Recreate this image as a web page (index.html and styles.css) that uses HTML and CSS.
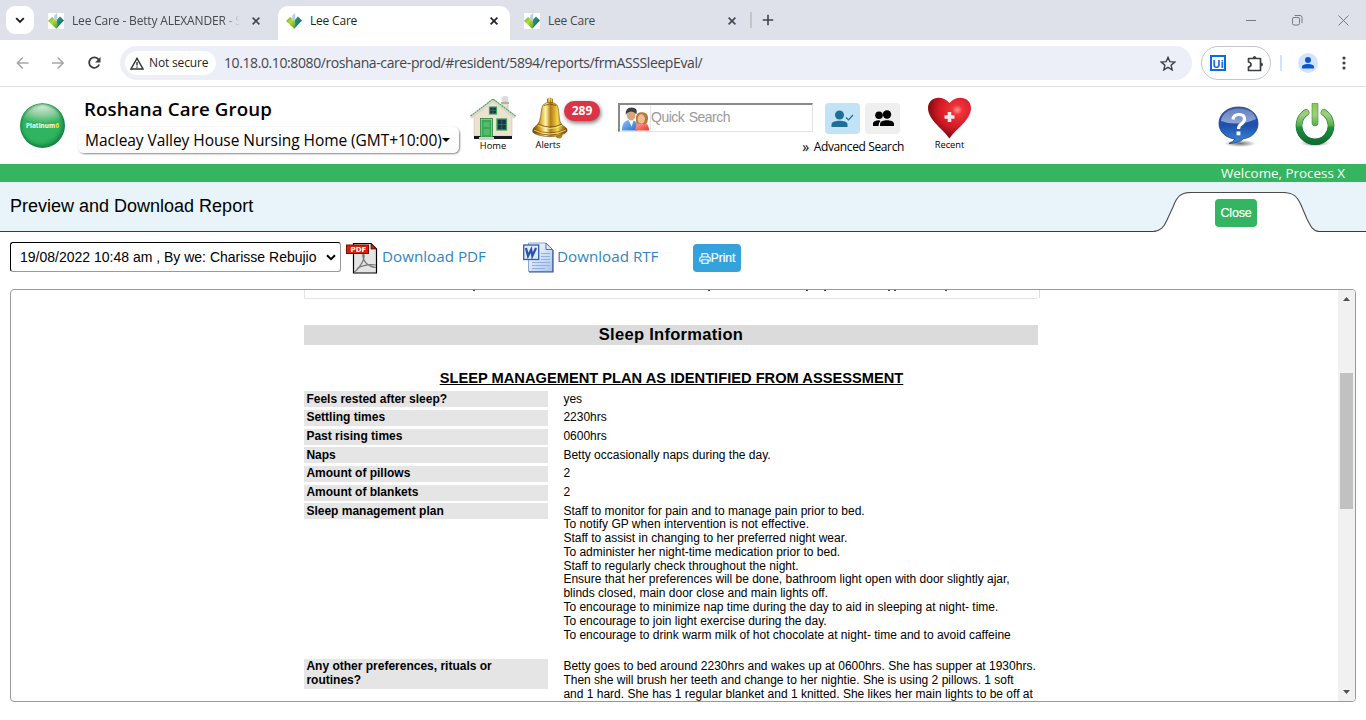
FILE: index.html
```html
<!DOCTYPE html>
<html lang="en">
<head>
<meta charset="utf-8">
<title>Lee Care</title>
<link rel="stylesheet" href="styles.css">
</head>
<body>
<svg class="defs" width="0" height="0">
  <defs>
    <linearGradient id="leafL" x1="0" y1="0" x2="1" y2="1"><stop offset="0" stop-color="#5aa53a"/><stop offset=".4" stop-color="#b9d93a"/><stop offset="1" stop-color="#3f9438"/></linearGradient>
    <linearGradient id="leafR" x1="0" y1="0" x2="1" y2="1"><stop offset="0" stop-color="#2f9c7c"/><stop offset="1" stop-color="#0d6470"/></linearGradient>
    <linearGradient id="gold" x1="0" x2="1"><stop offset="0" stop-color="#6b3f05"/><stop offset=".22" stop-color="#d9a520"/><stop offset=".38" stop-color="#fff6b0"/><stop offset=".52" stop-color="#b47b10"/><stop offset=".72" stop-color="#f5d648"/><stop offset="1" stop-color="#6b4306"/></linearGradient>
    <radialGradient id="red" cx=".68" cy=".3" r=".8"><stop offset="0" stop-color="#ff9a94"/><stop offset=".15" stop-color="#f0323a"/><stop offset=".55" stop-color="#d31925"/><stop offset="1" stop-color="#5a0508"/></radialGradient>
    <linearGradient id="blue" x1="0" y1="0" x2="0" y2="1"><stop offset="0" stop-color="#3858a8"/><stop offset=".5" stop-color="#1f4fae"/><stop offset="1" stop-color="#3d8ad8"/></linearGradient>
    <linearGradient id="gloss" x1="0" y1="0" x2="0" y2="1"><stop offset="0" stop-color="#fff" stop-opacity=".25"/><stop offset="1" stop-color="#fff" stop-opacity=".5"/></linearGradient>
    <linearGradient id="power" gradientUnits="userSpaceOnUse" x1="0" y1="0" x2="0" y2="40"><stop offset="0" stop-color="#8cc653"/><stop offset=".3" stop-color="#a0cf7c"/><stop offset=".55" stop-color="#5bb04c"/><stop offset=".62" stop-color="#1d8f3c"/><stop offset="1" stop-color="#0d6e30"/></linearGradient>
    <radialGradient id="shadow"><stop offset="0" stop-color="#333" stop-opacity=".7"/><stop offset="1" stop-color="#333" stop-opacity="0"/></radialGradient>
    <linearGradient id="manB" x1="0" y1="0" x2="1" y2="1"><stop offset="0" stop-color="#8fc4f5"/><stop offset="1" stop-color="#2a6fd0"/></linearGradient>
    <linearGradient id="womB" x1="0" y1="0" x2="1" y2="1"><stop offset="0" stop-color="#ffa79a"/><stop offset="1" stop-color="#e8352c"/></linearGradient>
    <linearGradient id="doc" x1="0" y1="0" x2="1" y2="1"><stop offset="0" stop-color="#fff"/><stop offset="1" stop-color="#a9c4f0"/></linearGradient>
    <symbol id="leaf" viewBox="0 0 16 16">
      <rect width="16" height="16" fill="#fff"/>
      <path d="M0 8 4.200 4 8 7.500 11 11 8.200 15.800Z" fill="url(#leafL)"/>
      <path d="M8.400 7.200 12 3.400 16 7.500 8.200 15.800 9.600 11Z" fill="url(#leafR)"/>
      <path d="M6.200 2.500 9.200 0v7.200L8 8.200 6.200 6.400Z" fill="#b9cfdd"/>
    </symbol>
    <symbol id="cross" viewBox="0 0 8 8"><path d="M.6.6 7.4 7.4M7.4.6.6 7.4" stroke="currentColor" stroke-width="1.6" fill="none"/></symbol>
  </defs>
</svg>

<div class="tabstrip">
  <div class="tab-search"><svg width="10" height="7" viewBox="0 0 10 7"><path d="M1.2 1.2 5 5 8.8 1.2" fill="none" stroke="#1f1f1f" stroke-width="1.9"/></svg></div>
  <div class="tab tab-first"><svg class="fav" width="16" height="16"><use href="#leaf"/></svg><span class="tab-title t1">Lee Care - Betty ALEXANDER - S</span><svg class="x" width="8" height="8"><use href="#cross"/></svg></div>
  <div class="tab tab-active"><svg class="fav" width="16" height="16"><use href="#leaf"/></svg><span class="tab-title">Lee Care</span><svg class="x" width="8" height="8"><use href="#cross"/></svg></div>
  <div class="tab tab-third"><svg class="fav" width="16" height="16"><use href="#leaf"/></svg><span class="tab-title">Lee Care</span><svg class="x" width="8" height="8"><use href="#cross"/></svg></div>
  <span class="tab-sep"></span>
  <svg class="plus" width="12" height="12" viewBox="0 0 12 12"><path d="M6 .8v10.4M.8 6h10.4" stroke="#40444a" stroke-width="1.6"/></svg>
  <svg class="win" width="94" height="12" viewBox="0 0 94 12" fill="none" stroke="#777b80"><path d="M0 6.5h10"/><rect x="46.500" y="3.500" width="7" height="7.500" rx="1.500"/><path d="M48.500 1.500H54a2 2 0 0 1 2 2V9"/></svg>
  <svg class="win-x" width="11" height="11" viewBox="0 0 11 11"><path d="M.5.5 10.500 10.500M10.500.5.5 10.500" stroke="#777b80"/></svg>
</div>

<div class="toolbar">
  <svg class="nav-icons" width="88" height="14" viewBox="0 0 88 14" fill="none"><g stroke="#a4a6a9" stroke-width="1.500"><path d="M12.500 7H1.500M6.800 1.500 1.300 7l5.500 5.500M36 7h11M41.700 1.500 47.200 7l-5.500 5.500"/></g><path d="M82.500 3.400A5.200 5.200 0 1 0 83.200 8.500" stroke="#3a3c40" stroke-width="1.800"/><path d="M84.500 1v5.400h-5.400z" fill="#3a3c40"/></svg>
  <div class="omnibox">
    <div class="secure"><svg width="14" height="13" viewBox="0 0 14 13"><path d="M7 1.300 13 12H1Z" fill="none" stroke="#333" stroke-width="1.400"/><path d="M7 5v3.600M7 9.500v1.300" stroke="#333" stroke-width="1.400"/></svg><span>Not secure</span></div>
    <span class="url">10.18.0.10:8080/roshana-care-prod/#resident/5894/reports/frmASSSleepEval/</span>
    <svg class="star" width="16" height="15" viewBox="0 0 16 15"><path d="M8 1.400 9.900 5.700 14.700 6.100 11.100 9.300 12.200 13.900 8 11.400 3.800 13.900 4.900 9.300 1.300 6.100 6.100 5.700Z" fill="none" stroke="#3c4043" stroke-width="1.400"/></svg>
  </div>
  <div class="ext"><span class="ui">Ui</span><svg width="17" height="17" viewBox="0 0 17 17"><path d="M1.500 3.500H13.500V15.500H1.500V12Q4 11.500 4 9.500T1.500 7Z" fill="none" stroke="#3c4043" stroke-width="1.700" stroke-linejoin="round"/><path d="M5.500 3.500a2 2.500 0 0 1 4 0zM13.500 7.500a2.500 2 0 0 1 0 4z" fill="#3c4043"/></svg></div>
  <span class="ext-sep"></span>
  <svg class="profile" width="20" height="20" viewBox="0 0 20 20"><circle cx="10" cy="10" r="10" fill="#d3e3fd"/><circle cx="10" cy="7" r="3" fill="#0b57d0"/><path d="M4 15.500v-1.800C4 11.800 7.500 11 10 11s6 .8 6 2.700v1.800z" fill="#0b57d0"/></svg>
  <svg class="dots" width="4" height="14" viewBox="0 0 4 14" fill="#3c4043"><circle cx="2" cy="2" r="1.600"/><circle cx="2" cy="7" r="1.600"/><circle cx="2" cy="12" r="1.600"/></svg>
</div>

<header class="app">
  <div class="logo">Platinum<b>6</b></div>
  <div class="org">
    <h1>Roshana Care Group</h1>
    <div class="site"><span>Macleay Valley House Nursing Home (GMT+10:00)</span><i></i></div>
  </div>
  <div class="tool home">
    <svg width="46" height="44" viewBox="0 0 46 44">
      <ellipse cx="35" cy="3" rx="3.500" ry="3" fill="#ccc" opacity=".7"/>
      <rect x="32" y="6" width="6" height="12" fill="#e9dfcd" stroke="#b9b1a2" stroke-width=".6"/><rect x="31" y="6" width="8" height="2" fill="#b8b0a4"/>
      <path d="M4 20 23 5 42 20V40H4Z" fill="#ece2cf" stroke="#c5bba5" stroke-width=".5"/>
      <path d="M1 21.500 23 4.500 45 21.500" fill="none" stroke="#dcd7d0" stroke-width="3"/><path d="M.5 20 23 3 45.500 20" fill="none" stroke="#46a854" stroke-width="1.100" stroke-dasharray="2 .6"/>
      <path d="M4 40h38v3H4z" fill="#16181c"/>
      <rect x="10.500" y="22.500" width="12" height="18.500" fill="#bfe3bd" stroke="#23803a" stroke-width=".8"/><rect x="11.500" y="23.500" width="10" height="17.500" fill="#3ba654"/><path d="M13.500 26h6v5h-6zM13.500 33h6v6h-6z" fill="#52bb6c"/>
      <rect x="27" y="23" width="9.500" height="11" fill="#17374a" stroke="#3aa553" stroke-width="1.300"/><path d="M31.700 24v9M28 28.500h8" stroke="#3f7182" stroke-width=".7"/>
      <rect x="19.500" y="11" width="7" height="7" fill="#17374a" stroke="#3aa553" stroke-width="1.200"/><path d="M23 11v7M20 14.500h6" stroke="#3f7182" stroke-width=".7"/>
      <path d="M9 41h15v3H9z" fill="#d7d0c5"/>
    </svg><span>Home</span>
  </div>
  <div class="tool alerts">
    <svg width="37" height="42" viewBox="0 0 37 42">
      <ellipse cx="26" cy="36" rx="11" ry="4" fill="url(#shadow)" opacity=".5"/>
      <circle cx="18" cy="3.500" r="3" fill="url(#gold)"/><circle cx="27" cy="38" r="3.400" fill="#b8860f"/>
      <path d="M11 8Q18 2 25 8C28 14 26 24 30 28Q37 32 34.500 35C28 41 8 41 1 35.500Q-.5 32 5 28C10 23 8 14 11 8Z" fill="url(#gold)" stroke="#70480b" stroke-width=".6"/>
      <path d="M6 27q12 6 24 0M1.500 32q16 8 33 0M3 35q15 6 30 0M12 8.500q6-3 12 0" fill="none" stroke="#714508" stroke-width="1" opacity=".75"/>
      <path d="M6 28.500q12 6 24 0M2 33q16 8 32 0" fill="none" stroke="#fff0a0" stroke-width=".7"/>
    </svg><span>Alerts</span><b class="badge">289</b>
  </div>
  <div class="search-area">
    <div class="search-row">
      <div class="search"><svg width="29" height="25" viewBox="0 0 30 25"><path d="M1 25C1 17 4 14 10 14s7 4 7 11Z" fill="url(#manB)"/><path d="M8 14h5l-2 7z" fill="#fff"/><ellipse cx="10.500" cy="9" rx="4.500" ry="5.500" fill="#d9a57b"/><path d="M5 9Q4 1 11 1t5 7Q12 4 8 6Q6 6 5 9Z" fill="#3b3f45"/><path d="M15 25C15 18 17 17 22 17s7 3 7 8Z" fill="url(#womB)"/><path d="M16 18C14 7 18 6 22 6s8 3 5 11Q26 19 22 18Z" fill="#b47d35"/><ellipse cx="21" cy="13" rx="3.800" ry="4.800" fill="#f0bd97"/></svg><span>Quick Search</span></div>
      <div class="sq on"><svg width="23" height="18" viewBox="0 0 23 18"><circle cx="8.500" cy="5" r="4.500" fill="#1c6f97"/><path d="M.5 17v-2.500C.5 11.800 5 10.800 8.500 10.800s8 1 8 3.700V17z" fill="#1c6f97"/><path d="M15 7.500 17.500 10 22 5" fill="none" stroke="#1c6f97" stroke-width="1.200"/></svg></div>
      <div class="sq"><svg width="22" height="17" viewBox="0 0 22 17"><circle cx="7" cy="5.200" r="3.800"/><circle cx="15" cy="4.500" r="4.200"/><path d="M1 16v-2.500C1 11.500 4 10.500 7 10.300L8.500 11Q6.500 12.500 6.500 16z"/><path d="M8 16v-2.200c0-2.500 4-3.500 7-3.500s7 1 7 3.500V16z"/></svg></div>
    </div>
    <div class="advanced"><em>»</em><span>Advanced Search</span></div>
  </div>
  <div class="tool recent">
    <svg width="43" height="42" viewBox="0 0 43 42"><path d="M21.500 41.500C16 33 0 23 0 11C0 0 14-3 21.500 6C29-3 43 0 43 11C43 23 27 33 21.500 41.500Z" fill="url(#red)"/><path d="M21.500 15v10M16.500 20h10" stroke="#ececec" stroke-width="3.600"/></svg><span>Recent</span>
  </div>
  <svg class="help" width="42" height="42" viewBox="0 0 42 42"><ellipse cx="22" cy="37.500" rx="16" ry="3.500" fill="url(#shadow)"/><path d="M20.500 1C9 1 1 8 1 17.500C1 26 8 32 17 33Q15 36 11 37.500Q21 37 25.500 32.800C34 31.500 40 25.500 40 17.500C40 8 32 1 20.500 1Z" fill="url(#blue)" stroke="#1c3d7c" stroke-width=".8"/><path d="M20.500 2.500C11 2.500 3.500 8 3 15Q20 21 38 13Q35 2.500 20.500 2.500Z" fill="url(#gloss)"/><path d="M15 13.500q.5-5 6-5t5.500 4.500q0 3-3 4.800t-3 5.200" fill="none" stroke="#fff" stroke-width="3.200"/><rect x="18.600" y="25.500" width="3.800" height="3.800" fill="#fff"/></svg>
  <svg class="power" width="40" height="44" viewBox="0 0 40 44"><ellipse cx="20" cy="40" rx="15" ry="3.500" fill="url(#shadow)"/><path d="M11 9.500A16 16 0 1 0 29 9.500" fill="none" stroke="#0f6a30" stroke-width="6.600" stroke-linecap="round"/><path d="M11 9.500A16 16 0 1 0 29 9.500" fill="none" stroke="url(#power)" stroke-width="5.600" stroke-linecap="round"/><path d="M17 .5h6V20a3 3 0 0 1-6 0Z" fill="url(#power)" stroke="#358d43" stroke-width=".6"/></svg>
</header>

<div class="welcome">Welcome, Process X</div>

<div class="band">
  <h2>Preview and Download Report</h2>
  <div class="close-tab">
    <svg width="166" height="40" viewBox="0 0 166 40"><path d="M0 40C8 39 11 35 14 28L20 15C24 4 28 .5 38 .5H130C140 .5 144 4 148 13L154 27C158 35 160 39 166 40Z" fill="#fff"/><path d="M0 39.500C8 39 11 35 14 28L20 15C24 4 28 .5 38 .5H130C140 .5 144 4 148 13L154 27C158 35 160 39 166 39.500" fill="none" stroke="#4a4a4a" stroke-width="1.100"/></svg>
    <span class="close">Close</span>
  </div>
</div>

<div class="actions">
  <div class="select"><span>19/08/2022 10:48 am , By we: Charisse Rebujio</span><svg width="10" height="7" viewBox="0 0 10 7"><path d="M1 1.200 5 5.200 9 1.200" fill="none" stroke="#000" stroke-width="2"/></svg></div>
  <svg class="pdf" width="32" height="32" viewBox="0 0 32 32"><path d="M7.500 1.500H25L30.500 7V31H7.500Z" fill="#e4e4e4" stroke="#000" stroke-width="1.200"/><path d="M25 1.500V7h5.500Z" fill="#d81e05" stroke="#000" stroke-width=".6"/><path d="M8 30C12 28 19 18 18 13C17 10 15 15 20 21Q24 25 30 25.500M11 26.500Q20 21.500 30 23" fill="none" stroke="#777" stroke-width="1.200"/><rect x=".5" y="3" width="22" height="8.500" fill="#d81e05" stroke="#7e1003"/><text x="4.500" y="10" class="pdf-t">PDF</text></svg>
  <a class="dl dl-pdf">Download PDF</a>
  <svg class="word" width="31" height="31" viewBox="0 0 31 31"><path d="M5.500 1H23L29.500 7.500V29.500H5.500Z" fill="url(#doc)" stroke="#8ba6cf"/><path d="M30 8v22H6" fill="none" stroke="#32558f" stroke-width="1.200"/><path d="M23 1V7.500h6.500Z" fill="#dfeafa" stroke="#32558f" stroke-width=".8"/><path d="M18 11.500h9M18 14.500h9M18 17.500h9M9 20.500h18M9 23.500h18M9 26.500h13" stroke="#8fb0e0"/><rect x=".7" y="3" width="15" height="14.500" fill="#dfe9fa" stroke="#2f5db2" stroke-width="1.300"/><path d="M3 6 5 14 8.200 7.500 9.300 14 13 6" fill="none" stroke="#2855a8" stroke-width="2.200"/></svg>
  <a class="dl dl-rtf">Download RTF</a>
  <span class="print"><svg width="12" height="11" viewBox="0 0 12 11"><path d="M3 4V.6h5l1 1V4M3 8H.8V5.500Q.8 4 2.300 4h7.400q1.500 0 1.500 1.500V8H9M3 6.800h6v3.600H3Z" fill="none" stroke="#fff" stroke-width="1.100"/></svg>Print</span>
</div>

<main class="frame">
  <div class="page">
    <div class="prev"><svg width="736" height="1" viewBox="0 0 736 1" fill="#444"><path d="M168 0h2v1h-2zM403 0h2v1h-2zM501 0h2v1h-2zM519 0h2v1h-2zM583 0h2v1h-2zM589 0h2v1h-2zM640 0h2v1h-2z"/></svg><i></i></div>
    <h3>Sleep Information</h3>
    <h4>SLEEP MANAGEMENT PLAN AS IDENTIFIED FROM ASSESSMENT</h4>
    <dl>
      <dt>Feels rested after sleep?</dt><dd>yes</dd>
      <dt>Settling times</dt><dd>2230hrs</dd>
      <dt>Past rising times</dt><dd>0600hrs</dd>
      <dt>Naps</dt><dd>Betty occasionally naps during the day.</dd>
      <dt>Amount of pillows</dt><dd>2</dd>
      <dt>Amount of blankets</dt><dd>2</dd>
      <dt>Sleep management plan</dt><dd class="plan">Staff to monitor for pain and to manage pain prior to bed.<br>To notify GP when intervention is not effective.<br>Staff to assist in changing to her preferred night wear.<br>To administer her night-time medication prior to bed.<br>Staff to regularly check throughout the night.<br>Ensure that her preferences will be done, bathroom light open with door slightly ajar,<br>blinds closed, main door close and main lights off.<br>To encourage to minimize nap time during the day to aid in sleeping at night- time.<br>To encourage to join light exercise during the day.<br>To encourage to drink warm milk of hot chocolate at night- time and to avoid caffeine</dd>
      <dt class="tall">Any other preferences, rituals or<br>routines?</dt><dd>Betty goes to bed around 2230hrs and wakes up at 0600hrs. She has supper at 1930hrs.<br>Then she will brush her teeth and change to her nightie. She is using 2 pillows. 1 soft<br>and 1 hard. She has 1 regular blanket and 1 knitted. She likes her main lights to be off at</dd>
    </dl>
  </div>
  <div class="scroll"><svg width="7" height="4" viewBox="0 0 7 4"><path d="M0 4 3.500 0 7 4Z" fill="#505050"/></svg><span class="thumb"></span><svg width="7" height="4" viewBox="0 0 7 4"><path d="M0 0 3.500 4 7 0Z" fill="#505050"/></svg></div>
</main>
</body>
</html>
```
FILE: styles.css
```css
* { box-sizing: border-box; }
body { margin: 0; width: 1366px; height: 720px; overflow: hidden; background: #fff; color: #000; font-family: "Open Sans", "Noto Sans", sans-serif; }
h1, h2, h3, h4, dl, dd { margin: 0; }
svg { display: block; flex: none; }
span, a { white-space: nowrap; }
.defs { position: absolute; }

/* browser tabs */
.tabstrip { display: flex; align-items: center; height: 40px; background: #dee1e9; }
.tab-search { display: flex; align-items: center; justify-content: center; width: 28px; height: 28px; margin-left: 6px; border-radius: 9px; background: #fff; }
.tab { display: flex; align-items: center; height: 34px; margin-top: 6px; padding-bottom: 5px; font-size: 12px; color: #45484c; }
.tab-first { width: 230px; margin-left: 14px; }
.tab-active { width: 232px; background: #fff; border-radius: 10px 10px 0 0; padding-left: 8px; color: #1f1f1f; }
.tab-third { width: 228px; padding-left: 14px; }
.tab .x { margin-left: auto; margin-right: 12px; }
.tab-first .x { margin-right: 18px; }
.tab-third .x { margin-right: 2px; }
.tab-title { margin-left: 8px; letter-spacing: -.2px; }
.t1 { width: 172px; margin-right: -4px; letter-spacing: -.16px; -webkit-mask-image: linear-gradient(90deg, #000 150px, transparent 168px); mask-image: linear-gradient(90deg, #000 150px, transparent 168px); }
.tab-sep { width: 2px; height: 16px; margin-left: 12px; background: #c3c5c9; }
.plus { margin-left: 10px; }
.win { margin-left: 472px; }
.win-x { margin-left: -2px; }

.toolbar { display: flex; align-items: center; height: 47px; border-bottom: 1px solid #dfe0e2; }
.nav-icons { margin-left: 16px; }
.omnibox { display: flex; align-items: center; width: 1072px; height: 34px; margin-left: 16px; border-radius: 17px; background: #eceef8; }
.secure { display: flex; align-items: center; width: 91px; height: 24px; margin-left: 5px; padding-left: 5px; border-radius: 12px; background: #fff; font-size: 12px; font-weight: 500; color: #1f1f1f; }
.secure span { margin: -1px 0 0 5px; letter-spacing: -.15px; }
.url { margin: -1px 0 0 8px; font-size: 14px; color: #454649; letter-spacing: -.4px; }
.star { margin-left: auto; margin-right: 16px; }
.ext { display: flex; align-items: center; width: 70px; height: 34px; margin-left: 9px; padding-left: 8px; gap: 21px; border: 1px solid #c4c6ca; border-radius: 17px; }
.ui { display: flex; align-items: center; justify-content: center; width: 16px; height: 16px; border: 2px solid #1169e2; font: bold 11px "Open Sans", sans-serif; color: #1169e2; }
.ext-sep { width: 2px; height: 16px; margin-left: 9px; background: #d3e3fd; }
.profile { margin-left: 16px; }
.dots { margin-left: 24px; }

/* application header */
.app { display: flex; align-items: flex-start; height: 77px; }
.logo { display: flex; align-items: center; justify-content: center; width: 45px; height: 45px; margin: 16px 0 0 20px; border-radius: 50%; background: radial-gradient(ellipse 70% 42% at 50% 4%, #d9eedd, #8fce9f 55%, transparent 100%), #2fb45f; box-shadow: inset 0 0 3px 1px #177f40, inset -2px -3px 4px #1b8746; color: #fff; font: bold 6.300px "Noto Sans", sans-serif; letter-spacing: .1px; }
.logo b { color: #e2d91a; }
.org { width: 381px; margin-left: 13px; }
h1 { height: 40px; padding-left: 6px; font-size: 18.700px; font-weight: 550; line-height: 44px; letter-spacing: .13px; white-space: nowrap; }
.site { display: flex; align-items: center; height: 26px; padding-left: 7px; border-radius: 6px; background: linear-gradient(#fff, #fbfbfb); box-shadow: 1px 1px 2px #888; font-size: 15.500px; letter-spacing: -.06px; }
.site span { width: 357px; }
.site i { border: 4.500px solid transparent; border-top-color: #000; border-bottom: 0; }
.tool { position: relative; display: flex; flex-direction: column; align-items: center; font-size: 9.300px; line-height: 12px; }
.home { width: 46px; margin: 9px 0 0 11px; }
.alerts { width: 37px; margin: 10px 0 0 16px; }
.alerts > span { margin-left: -5px; }
.badge { position: absolute; left: 32px; top: 4px; width: 36px; height: 20px; border-radius: 10px; background: #dc3446; box-shadow: 1px 2px 4px #777; color: #fff; font-size: 12px; line-height: 20px; text-align: center; }
.search-area { width: 287px; margin: 16px 0 0 49px; }
.search-row { display: flex; }
.search { display: flex; align-items: center; width: 195px; height: 29px; padding-left: 1px; border: 1px solid #e2e2e2; border-top: 2px solid #898989; border-left: 2px solid #898989; font: 14px "Liberation Sans", sans-serif; color: #9a9a9a; }
.search span { height: 26px; border-left: 1px solid #e5e5e5; line-height: 24px; letter-spacing: -.5px; word-spacing: 1px; }
.sq { display: flex; align-items: center; justify-content: center; width: 35px; height: 31px; margin-left: 5px; border-radius: 4px; background: #efefef; }
.sq.on { margin-left: 12px; background: #c2e3f5; }
.advanced { display: flex; align-items: center; justify-content: flex-end; gap: 5px; height: 24px; padding-right: 1px; font-size: 12px; letter-spacing: -.38px; }
.advanced em { font-style: normal; font-size: 14px; }
.recent { width: 43px; margin: 10px 0 0 23px; }
.help { margin: 19px 0 0 247px; }
.power { margin: 16px 0 0 35px; }
.welcome { height: 18px; padding-right: 21px; background: #35b560; color: #fff; font-size: 13.400px; line-height: 18px; text-align: right; }

/* title band */
.band { display: flex; justify-content: space-between; height: 50px; padding-left: 10px; background: #e8f3fa; border-bottom: 1px solid #2c3c5c; }
h2 { font: 18px/48px "Liberation Sans", sans-serif; }
.close-tab { display: grid; width: 166px; margin: 10px 47px 0 0; }
.close-tab > * { grid-area: 1 / 1; }
.close { place-self: start center; margin: 7px 0 0; width: 42px; height: 28px; border-radius: 4px; background: #33b561; color: #fff; font: 12.500px/28px "Liberation Sans", sans-serif; letter-spacing: -.2px; text-align: center; -webkit-text-stroke: .2px #fff; }

.actions { display: flex; align-items: flex-start; height: 57px; padding: 10px 0 0 10px; }
.select { display: flex; align-items: center; width: 331px; height: 30px; padding-left: 9px; border: 1px solid #999; border-top-color: #000; border-left-color: #000; border-radius: 3px; font: 14px "Liberation Sans", sans-serif; }
.select svg { margin-left: auto; margin-right: 4px; }
.pdf { margin-left: 5px; }
.pdf-t { font: bold 7px "DejaVu Sans", sans-serif; fill: #fff; }
.dl { font-size: 15.200px; line-height: 28px; color: #2f86c0; }
.dl-pdf { width: 105px; margin-left: 4px; }
.dl-rtf { width: 102px; margin-left: 3px; }
.word { margin-left: 36px; }
.print { display: flex; align-items: center; justify-content: center; width: 48px; height: 28px; margin: 2px 0 0 34px; border-radius: 4px; background: #35a3db; color: #fff; font: 12px "Liberation Sans", sans-serif; -webkit-text-stroke: .2px #fff; }

/* report preview */
.frame { display: flex; justify-content: space-between; width: 1346px; height: 413px; margin-left: 10px; border: 1px solid #999; border-radius: 4px; overflow: hidden; font-family: "Liberation Sans", sans-serif; }
.page { width: 736px; margin-left: 293px; }
.prev { display: flex; justify-content: space-between; width: 736px; height: 9px; border-left: 1px solid #e5e5e5; background: linear-gradient(#e3e3e3, #e3e3e3) 0 100% / 732px 1px no-repeat; }
.prev svg { margin-right: -736px; }
.prev i { width: 1px; height: 8px; margin-left: auto; background: #ddd; }
h3 { width: 734px; height: 20px; margin-top: 26px; background: #dbdbdb; font-size: 16.500px; line-height: 19px; letter-spacing: .3px; text-align: center; }
h4 { width: 735px; height: 46.330px; padding-top: 23px; font-size: 14.670px; line-height: 20px; text-align: center; text-decoration: underline; white-space: nowrap; }
dl { display: grid; grid-template-columns: 244px 1fr; column-gap: 15px; row-gap: 2.670px; font-size: 12px; line-height: 13.780px; white-space: nowrap; }
dt { height: 16px; padding: 1.300px 0 0 2.400px; background: #e5e5e5; font-weight: bold; }
dd { height: 16px; padding: 1.300px 0 0 .4px; }
.plan { height: 153px; }
.tall { height: 30px; }
.scroll { display: flex; flex-direction: column; align-items: center; width: 17px; padding: 7px 0; background: #f1f1f1; }
.thumb { width: 13px; height: 136px; margin: 72px 0 auto; background: #c1c1c1; }
```
